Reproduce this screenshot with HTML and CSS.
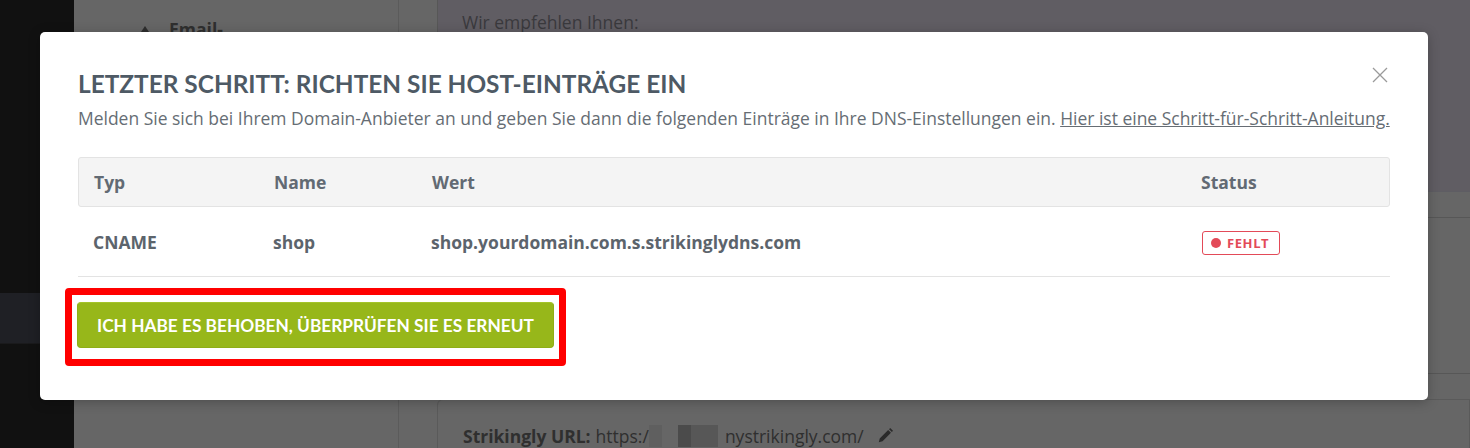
FILE: index.html
```html
<!DOCTYPE html>
<html lang="de">
<head>
<meta charset="utf-8">
<title>Host-Einträge</title>
<link rel="stylesheet" href="styles.css">
</head>
<body>
<div class="app">
  <aside class="sidebar">
    <div class="side-active"></div>
  </aside>
  <section class="panel">
    <div class="panel-item">
      <svg class="panel-icon" width="10" height="8" viewBox="0 0 10 8"><path d="M5 1 L9 7 L1 7 Z" fill="#2e2e2e"/></svg>
      <span class="panel-label">Email-</span>
    </div>
  </section>
  <main class="main">
    <div class="reco"><p class="reco-text">Wir empfehlen Ihnen:</p></div>
    <div class="card"></div>
    <div class="url-card">
      <p class="url-line"><b>Strikingly URL:</b> https:/<span class="blur b1"></span><span class="blur b2"></span><span class="blur b3"></span>nystrikingly.com/
        <svg class="pencil" width="18" height="18" viewBox="0 0 16 16"><path d="M2.5 13.5 L3.3 10.2 L10.8 2.7 L13.3 5.2 L5.8 12.7 Z M11.6 1.9 L12.6 0.9 L15.1 3.4 L14.1 4.4 Z" fill="#2a2a2a"/></svg>
      </p>
    </div>
  </main>
</div>

<div class="modal">
  <button class="close" aria-label="Schließen">
    <svg width="16" height="16" viewBox="0 0 16 16"><path d="M1 1 L15 15 M15 1 L1 15" stroke="#9a9a9a" stroke-width="1.3" fill="none"/></svg>
  </button>
  <h2 class="modal-title">LETZTER SCHRITT: RICHTEN SIE HOST-EINTRÄGE EIN</h2>
  <p class="modal-sub">Melden Sie sich bei Ihrem Domain-Anbieter an und geben Sie dann die folgenden Einträge in Ihre DNS-Einstellungen ein. <a class="guide" href="#">Hier ist eine Schritt-für-Schritt-Anleitung.</a></p>
  <div class="dns">
    <div class="dns-head">
      <span>Typ</span><span>Name</span><span>Wert</span><span>Status</span>
    </div>
    <div class="dns-row">
      <span>CNAME</span><span>shop</span><span>shop.yourdomain.com.s.strikinglydns.com</span>
      <span><span class="badge"><i class="dot"></i>FEHLT</span></span>
    </div>
  </div>
  <div class="highlight">
    <button class="recheck">ICH HABE ES BEHOBEN, ÜBERPRÜFEN SIE ES ERNEUT</button>
  </div>
</div>
</body>
</html>
```
FILE: styles.css
```css
* { box-sizing: border-box; }
html, body { margin: 0; padding: 0; }
body {
  width: 1470px;
  height: 448px;
  overflow: hidden;
  font-family: "Open Sans", "Liberation Sans", sans-serif;
  background: #666;
  position: relative;
}
.app {
  display: flex;
  height: 448px;
}
.sidebar {
  width: 74px;
  flex: none;
  background: #111;
  padding-top: 293px;
}
.side-active {
  height: 51px;
  background: #1f2025;
  border-bottom: 1px solid #1a1a1c;
}
.panel {
  width: 325px;
  flex: none;
  background: #666;
  border-right: 1px solid #5b5b5b;
  padding: 17px 0 0 66px;
}
.panel-item {
  display: flex;
  align-items: center;
  gap: 19px;
}
.panel-label {
  font-weight: 700;
  font-size: 17.5px;
  color: #2f2f2f;
}
.main {
  flex: 1;
  padding-left: 38px;
  display: flex;
  flex-direction: column;
}
.reco {
  height: 197px;
  background: #605d63;
  border-left: 1px solid #575757;
  border-bottom: 1px solid #5e5d63;
  padding: 10px 0 0 24px;
}
.reco-text {
  margin: 0;
  font-size: 17.5px;
  color: #3a393d;
}
.card {
  margin-top: 25px;
  height: 162px;
  border-top: 1px solid #575757;
  border-bottom: 1px solid #575757;
}
.url-card {
  margin-top: 25px;
  flex: 1;
  border: 1px solid #5a5a5a;
  border-bottom: none;
  border-radius: 6px 0 0 0;
  padding: 24px 0 0 25px;
}
.url-line {
  margin: 0;
  font-size: 17.5px;
  color: #2f2f2f;
  display: flex;
  align-items: center;
}
.url-line b { margin-right: 5px; }
.blur { display: inline-block; height: 22px; }
.b1 { width: 13px; background: #5f5f5f; margin-right: 16px; }
.b2 { width: 13px; background: #4b4b4b; }
.b3 { width: 27px; background: #575757; margin-right: 7px; }
.pencil { margin-left: 12px; }

/* modal */
.modal {
  position: absolute;
  left: 40px;
  top: 32px;
  width: 1388px;
  height: 368px;
  background: #fff;
  border-radius: 5px;
  box-shadow: 0 2px 12px rgba(0,0,0,.25);
  padding: 36px 38px 34px 38px;
}
.close {
  position: absolute;
  top: 35px;
  right: 40px;
  width: 16px;
  height: 16px;
  padding: 0;
  border: 0;
  background: none;
  display: flex;
}
.modal-title {
  margin: 0 0 6px;
  font-family: "Lato", sans-serif;
  font-weight: 700;
  font-size: 24.4px;
  line-height: 32px;
  color: #4e5a65;
}
.modal-sub {
  margin: 0 0 27px;
  font-size: 17.48px;
  line-height: 24px;
  color: #666d74;
  white-space: nowrap;
}
.guide { color: #666d74; text-decoration: underline; }
.dns-head, .dns-row {
  display: grid;
  grid-template-columns: 180px 158px 1fr 203px;
  align-items: center;
}
.dns-head > span, .dns-row > span { padding-left: 15px; }
.dns-head {
  height: 50px;
  background: #f4f4f4;
  border: 1px solid #e3e3e3;
  border-radius: 3px;
  font-weight: 700;
  font-size: 17.5px;
  color: #626a73;
}
.dns-row {
  height: 70px;
  border-bottom: 1px solid #e3e3e3;
  font-weight: 700;
  font-size: 17.5px;
  color: #5c646c;
}
.badge {
  display: inline-flex;
  align-items: center;
  gap: 6px;
  height: 24px;
  padding: 0 10px 0 8px;
  border: 1px solid #e34a58;
  border-radius: 3px;
  color: #e34a58;
  font-size: 13px;
  letter-spacing: 0.6px;
  font-weight: 700;
}
.dot {
  width: 10px;
  height: 10px;
  border-radius: 50%;
  background: #e34a58;
}
.highlight {
  display: inline-block;
  margin: 11px 0 0 -13px;
  border: 7px solid #ff0000;
  border-radius: 4px;
  padding: 7px 5px 11px 5px;
}
.recheck {
  display: block;
  width: 477px;
  height: 46px;
  background: #97b71a;
  border: 1px solid #8fae16;
  border-top-color: #a4c42a;
  border-radius: 4px;
  color: #fff;
  font-family: "Lato", sans-serif;
  font-weight: 700;
  font-size: 17.3px;
  padding: 0;
}
```
